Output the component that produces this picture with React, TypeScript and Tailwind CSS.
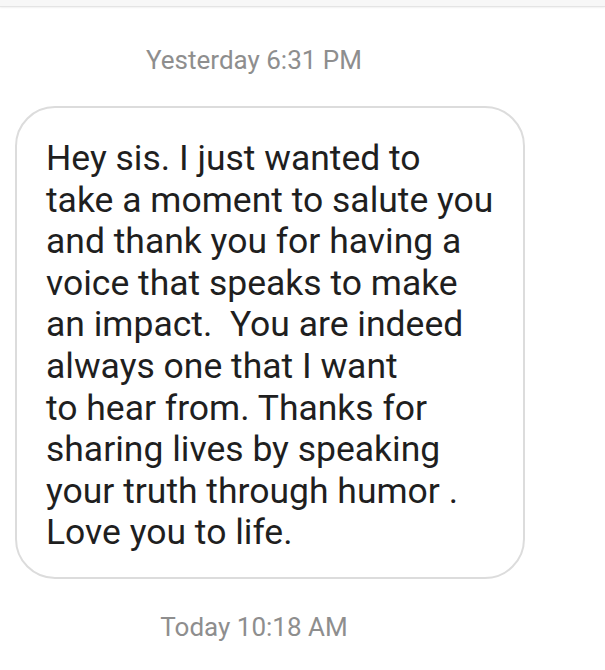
export default function App() {
  const lines = [
    "Hey sis. I just wanted to",
    "take a moment to salute you",
    "and thank you for having a",
    "voice that speaks to make",
    "an impact.\u00a0 You are indeed",
    "always one that I want",
    "to hear from. Thanks for",
    "sharing lives by speaking",
    "your truth through humor .",
    "Love you to life.",
  ];

  return (
    <div className="w-[605px] h-[670px] bg-white overflow-hidden font-['Roboto',sans-serif]">
      {/* top bar */}
      <div className="h-[7px] bg-[#f7f7f7] border-b border-[#e4e4e4] shadow-[0_1px_2px_rgba(0,0,0,0.06)]" />

      <div className="w-[508px] pt-[38px] text-center text-[26px] leading-[30px] text-[#8e8e8e]">
        Yesterday 6:31 PM
      </div>

      <div className="ml-[15px] mt-[31px] w-[510px] h-[473px] rounded-[40px] border-2 border-[#dcdcdc] pl-[29px] pt-[30px]">
        <div className="text-[35.5px] leading-[41.6px] text-[#1f1f1f]">
          {lines.map((l, i) => (
            <div key={i} className="whitespace-pre">{l}</div>
          ))}
        </div>
      </div>

      <div className="w-[508px] pt-[33px] text-center text-[26px] leading-[30px] text-[#8e8e8e]">
        Today 10:18 AM
      </div>
    </div>
  );
}
